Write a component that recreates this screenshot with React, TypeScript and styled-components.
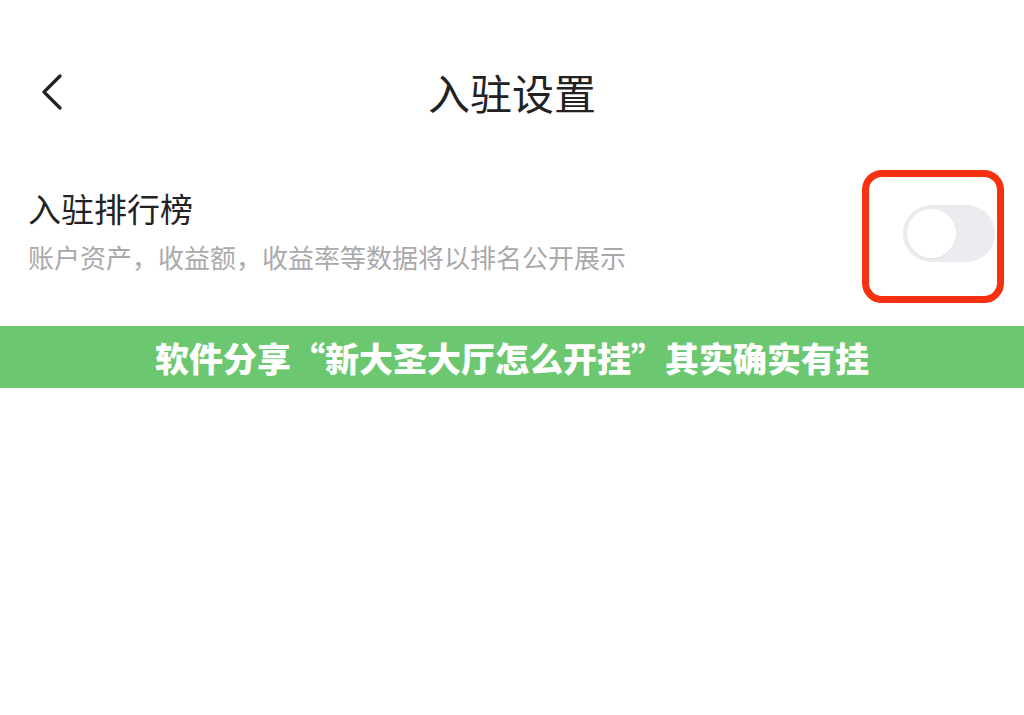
import React from 'react';
import styled, { createGlobalStyle } from 'styled-components';

const GlobalStyle = createGlobalStyle`
  html, body {
    margin: 0;
    padding: 0;
    background: #ffffff;
  }
  body {
    font-family: "Noto Sans CJK SC", "Noto Sans", sans-serif;
  }
`;

const Page = styled.div`
  width: 1024px;
  height: 715px;
  display: flex;
  flex-direction: column;
  background: #ffffff;
  overflow: hidden;
`;

const Header = styled.div`
  display: grid;
  grid-template-columns: 1fr auto 1fr;
  align-items: center;
  height: 48px;
  margin-top: 68px;
`;

const BackButton = styled.div`
  display: flex;
  align-items: center;
  padding-left: 38px;
  height: 48px;
`;

const Title = styled.h1`
  margin: 0;
  font-size: 42px;
  line-height: 48px;
  font-weight: 400;
  color: #222222;
`;

const SettingRow = styled.div`
  display: flex;
  justify-content: space-between;
  align-items: flex-start;
  margin-top: 54px;
  padding: 0 20px 0 28px;
`;

const RowText = styled.div`
  display: flex;
  flex-direction: column;
  margin-top: 18px;
`;

const RowTitle = styled.div`
  font-size: 33px;
  line-height: 40px;
  color: #222222;
`;

const RowDesc = styled.div`
  margin-top: 12px;
  font-size: 26px;
  line-height: 34px;
  color: #a9a9ab;
`;

const Highlight = styled.div`
  box-sizing: border-box;
  width: 142px;
  height: 133px;
  border: 7px solid #f7300f;
  border-radius: 20px;
  display: flex;
  justify-content: flex-end;
  padding: 28px 2px 0 0;
`;

const Track = styled.div<{ $on: boolean }>`
  box-sizing: border-box;
  width: 92px;
  height: 57px;
  border-radius: 29px;
  padding: 4px;
  background: ${p => (p.$on ? '#34c759' : '#ebebf0')};
  display: flex;
  justify-content: ${p => (p.$on ? 'flex-end' : 'flex-start')};
  align-items: center;
`;

const Knob = styled.div`
  width: 49px;
  height: 49px;
  border-radius: 50%;
  background: #ffffff;
  box-shadow: 0 1px 2px rgba(0, 0, 0, 0.06);
`;

const Banner = styled.div`
  margin-top: 23px;
  height: 62px;
  background: #6cc870;
  display: flex;
  align-items: center;
  justify-content: center;
  color: #ffffff;
  font-size: 34px;
  font-weight: 900;
`;

const Toggle = ({ on }: { on: boolean }) => (
  <Track $on={on}>
    <Knob />
  </Track>
);

export default function App() {
  return (
    <Page>
      <GlobalStyle />
      <Header>
        <BackButton>
          <svg width="28" height="36" viewBox="0 0 28 36" fill="none">
            <path d="M22 2 L6 18 L22 34" stroke="#222222" strokeWidth="3.2" strokeLinecap="round" strokeLinejoin="round" />
          </svg>
        </BackButton>
        <Title>入驻设置</Title>
        <div />
      </Header>
      <SettingRow>
        <RowText>
          <RowTitle>入驻排行榜</RowTitle>
          <RowDesc>账户资产，收益额，收益率等数据将以排名公开展示</RowDesc>
        </RowText>
        <Highlight>
          <Toggle on={false} />
        </Highlight>
      </SettingRow>
      <Banner>软件分享“新大圣大厅怎么开挂”其实确实有挂</Banner>
    </Page>
  );
}
